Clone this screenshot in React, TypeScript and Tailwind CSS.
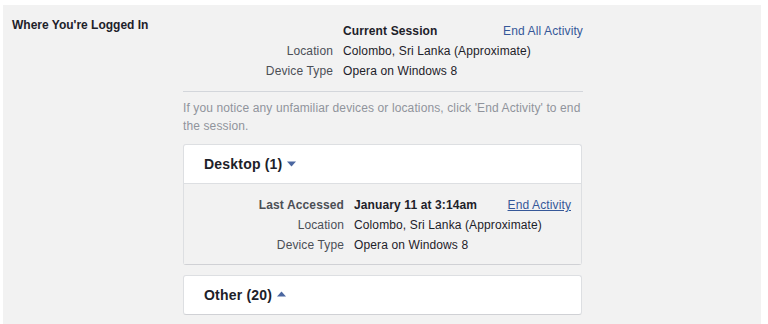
import React from "react";

const Down = () => (
  <svg width="9" height="6" viewBox="0 0 9 6" className="inline-block ml-[5px] mb-[1px]">
    <path d="M0 0.5 L9 0.5 L4.5 5.5 Z" fill="#4b67a1" />
  </svg>
);
const Up = () => (
  <svg width="9" height="6" viewBox="0 0 9 6" className="inline-block ml-[5px] mb-[2px]">
    <path d="M0 5.5 L9 5.5 L4.5 0.5 Z" fill="#4b67a1" />
  </svg>
);

export default function App() {
  return (
    <div
      className="w-[768px] h-[324px] bg-white pl-[3px] pr-[7px] pt-[5px] overflow-hidden text-[12px]"
      style={{ fontFamily: '"Liberation Sans", Arial, sans-serif' }}
    >
      <div className="h-[319px] bg-[#f2f2f2] flex">
        <div className="w-[180px] pl-[9px] pt-[12px] font-bold text-[#1d2129] leading-[16px]">
          Where You're Logged In
        </div>
        <div className="w-[400px] pt-[16px] tracking-[0.12px]">
          <div className="grid grid-cols-[150px_1fr] gap-x-[10px] leading-[20px]">
            <div />
            <div className="flex justify-between">
              <span className="font-bold text-[#1d2129]">Current Session</span>
              <span className="text-[#365899]">End All Activity</span>
            </div>
            <div className="text-right text-[#4b4f56]">Location</div>
            <div className="text-[#1d2129]">Colombo, Sri Lanka (Approximate)</div>
            <div className="text-right text-[#4b4f56]">Device Type</div>
            <div className="text-[#1d2129]">Opera on Windows 8</div>
          </div>
          <div className="mt-[10px] border-t border-[#d3d6db]" />
          <div className="mt-[7px] text-[#90949c] leading-[18px]">
            If you notice any unfamiliar devices or locations, click 'End Activity' to end the session.
          </div>
          <div className="mt-[9px] w-[399px] bg-white border border-[#dddfe2] border-b-[#d0d1d5] rounded-[3px]">
            <div className="h-[39px] flex items-center pl-[20px] border-b border-[#dddfe2] text-[14px] font-bold text-[#1d2129] tracking-[0.2px]">
              Desktop (1)
              <Down />
            </div>
            <div className="bg-[#f2f2f2] pt-[11px] pb-[9px] pr-[10px] grid grid-cols-[160px_1fr] gap-x-[10px] leading-[20px]">
              <div className="text-right font-bold text-[#4b4f56]">Last Accessed</div>
              <div className="flex justify-between">
                <span className="font-bold text-[#1d2129]">January 11 at 3:14am</span>
                <span className="text-[#365899] underline">End Activity</span>
              </div>
              <div className="text-right text-[#4b4f56]">Location</div>
              <div className="text-[#1d2129]">Colombo, Sri Lanka (Approximate)</div>
              <div className="text-right text-[#4b4f56]">Device Type</div>
              <div className="text-[#1d2129]">Opera on Windows 8</div>
            </div>
          </div>
          <div className="mt-[10px] w-[399px] h-[40px] bg-white border border-[#dddfe2] border-b-[#d0d1d5] rounded-[3px] flex items-center pl-[20px] text-[14px] font-bold text-[#1d2129] tracking-[0.2px]">
            Other (20)
            <Up />
          </div>
        </div>
      </div>
    </div>
  );
}
